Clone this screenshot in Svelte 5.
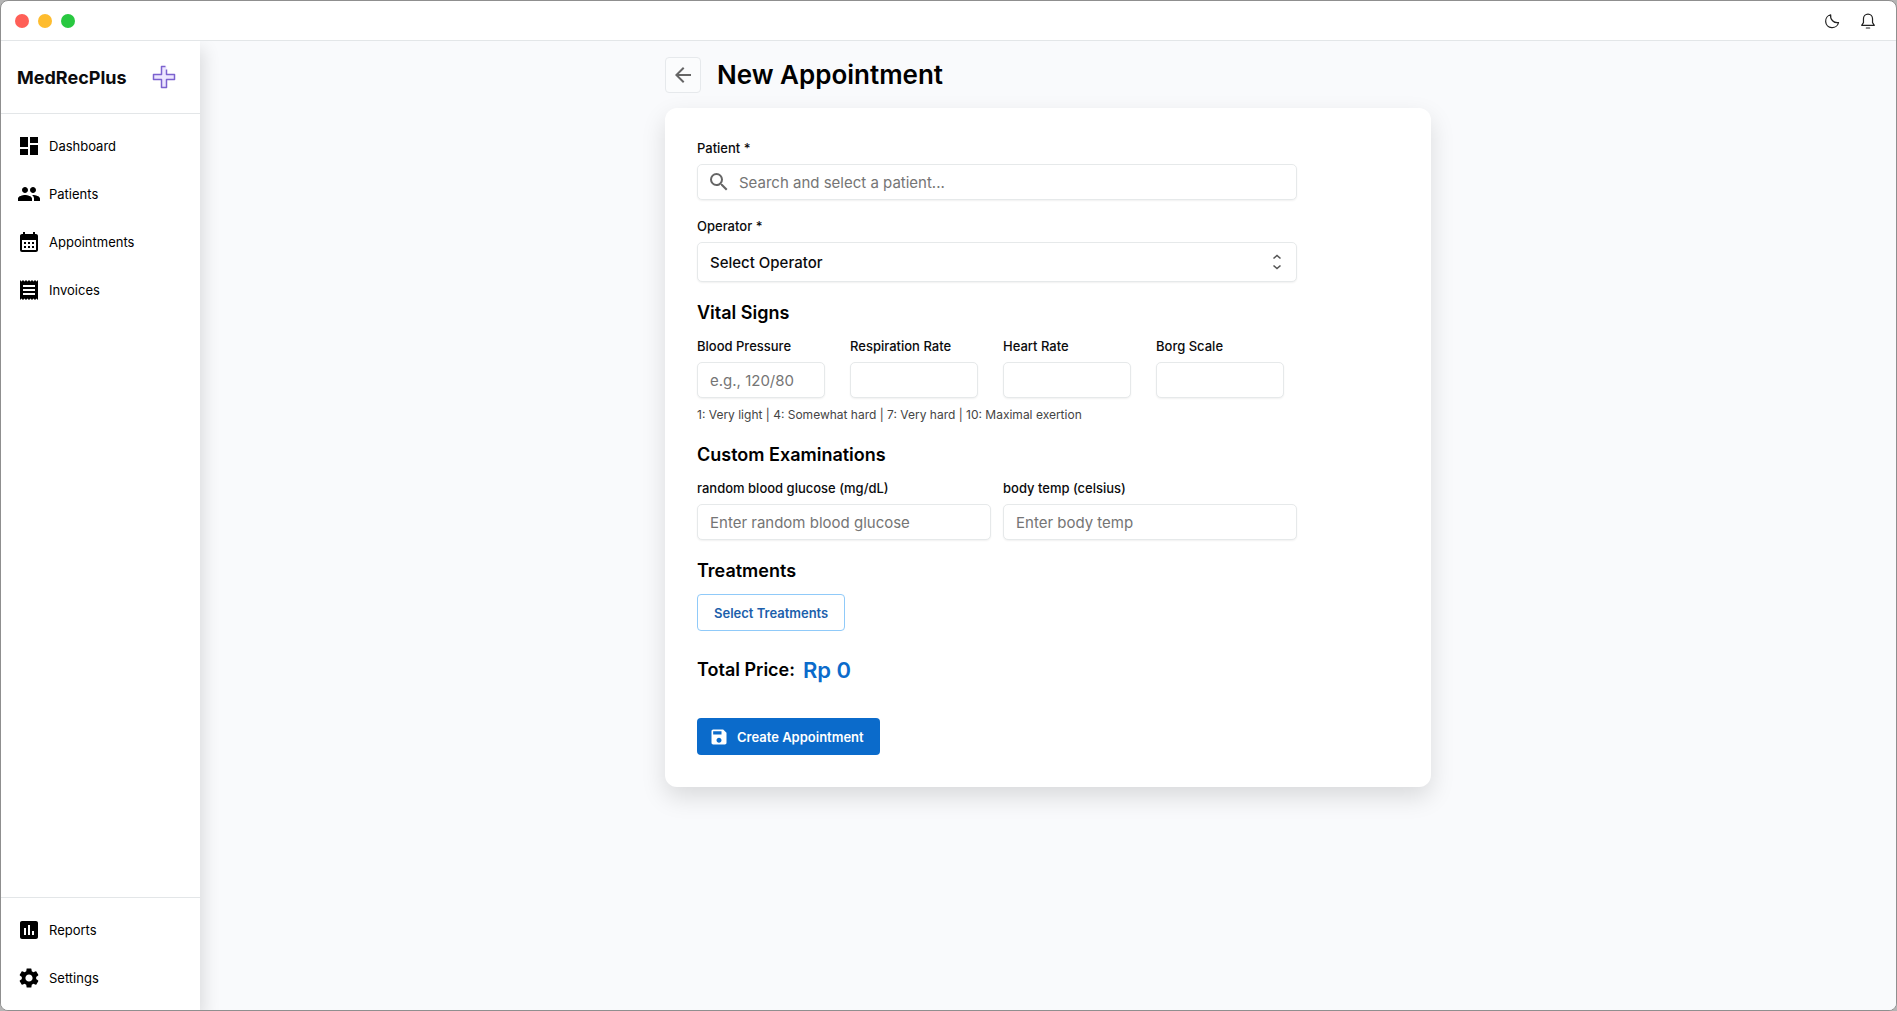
<script lang="ts">
    type NavItem = {
        label: string;
        icon: string;
    };

    type Vital = {
        id: string;
        label: string;
        placeholder: string;
    };

    const mainNav: NavItem[] = [
        { label: 'Dashboard', icon: 'M3 13h8V3H3v10zm0 8h8v-6H3v6zm10 0h8V11h-8v10zm0-18v6h8V3h-8z' },
        { label: 'Patients', icon: 'M16 11c1.66 0 2.99-1.34 2.99-3S17.66 5 16 5s-3 1.34-3 3 1.34 3 3 3zm-8 0c1.66 0 2.99-1.34 2.99-3S9.66 5 8 5 5 6.34 5 8s1.34 3 3 3zm0 2c-2.33 0-7 1.17-7 3.5V19h14v-2.5c0-2.33-4.67-3.5-7-3.5zm8 0c-.29 0-.62.02-.97.05 1.16.84 1.97 1.97 1.97 3.45V19h6v-2.5c0-2.33-4.67-3.5-7-3.5z' },
        { label: 'Appointments', icon: 'M19 4h-1V2h-2v2H8V2H6v2H5c-1.11 0-1.99.9-1.99 2L3 20a2 2 0 0 0 2 2h14c1.1 0 2-.9 2-2V6c0-1.1-.9-2-2-2zm0 16H5V10h14v10zM9 14H7v-2h2v2zm4 0h-2v-2h2v2zm4 0h-2v-2h2v2zm-8 4H7v-2h2v2zm4 0h-2v-2h2v2zm4 0h-2v-2h2v2z' },
        { label: 'Invoices', icon: 'M18 17H6v-2h12v2zm0-4H6v-2h12v2zm0-4H6V7h12v2zM3 22l1.5-1.5L6 22l1.5-1.5L9 22l1.5-1.5L12 22l1.5-1.5L15 22l1.5-1.5L18 22l1.5-1.5L21 22V2l-1.5 1.5L18 2l-1.5 1.5L15 2l-1.5 1.5L12 2l-1.5 1.5L9 2 7.5 3.5 6 2 4.5 3.5 3 2v20z' }
    ];

    const footerNav: NavItem[] = [
        { label: 'Reports', icon: 'M19 3H5c-1.1 0-2 .9-2 2v14c0 1.1.9 2 2 2h14c1.1 0 2-.9 2-2V5c0-1.1-.9-2-2-2zM9 17H7v-7h2v7zm4 0h-2V7h2v10zm4 0h-2v-4h2v4z' },
        { label: 'Settings', icon: 'M19.14 12.94c.04-.3.06-.61.06-.94 0-.32-.02-.64-.07-.94l2.03-1.58a.49.49 0 0 0 .12-.61l-1.92-3.32a.488.488 0 0 0-.59-.22l-2.39.96c-.5-.38-1.03-.7-1.62-.94l-.36-2.54a.484.484 0 0 0-.48-.41h-3.84c-.24 0-.43.17-.47.41l-.36 2.54c-.59.24-1.13.57-1.62.94l-2.39-.96c-.22-.08-.47 0-.59.22L2.74 8.87c-.12.21-.08.47.12.61l2.03 1.58c-.05.3-.09.63-.09.94s.02.64.07.94l-2.03 1.58a.49.49 0 0 0-.12.61l1.92 3.32c.12.22.37.29.59.22l2.39-.96c.5.38 1.03.7 1.62.94l.36 2.54c.05.24.24.41.48.41h3.84c.24 0 .44-.17.47-.41l.36-2.54c.59-.24 1.13-.56 1.62-.94l2.39.96c.22.08.47 0 .59-.22l1.92-3.32c.12-.22.07-.47-.12-.61l-2.01-1.58zM12 15.6c-1.98 0-3.6-1.62-3.6-3.6s1.62-3.6 3.6-3.6 3.6 1.62 3.6 3.6-1.62 3.6-3.6 3.6z' }
    ];

    const vitals: Vital[] = [
        { id: 'blood-pressure', label: 'Blood Pressure', placeholder: 'e.g., 120/80' },
        { id: 'respiration-rate', label: 'Respiration Rate', placeholder: '' },
        { id: 'heart-rate', label: 'Heart Rate', placeholder: '' },
        { id: 'borg-scale', label: 'Borg Scale', placeholder: '' }
    ];

    const exams = [
        { id: 'glucose', name: 'random blood glucose', unit: 'mg/dL' },
        { id: 'temp', name: 'body temp', unit: 'celsius' }
    ];

    let total = $state(0);
</script>

{#snippet navLink(item: NavItem)}
    <a class="nav-link" href="#{item.label.toLowerCase()}">
        <svg viewBox="0 0 24 24" width="24" height="24" fill="currentColor"><path d={item.icon} /></svg>
        <span>{item.label}</span>
    </a>
{/snippet}

<div class="window">
    <header class="titlebar">
        <div class="lights">
            <span class="light close"></span>
            <span class="light minimize"></span>
            <span class="light maximize"></span>
        </div>
        <div class="actions">
            <button aria-label="Toggle dark mode">
                <svg viewBox="0 0 24 24" width="16" height="16" fill="none" stroke="currentColor" stroke-width="1.8" stroke-linecap="round" stroke-linejoin="round">
                    <path d="M10 2.600A9.800 9.800 0 1 0 21.800 14.400 10.200 10.200 0 0 1 10 2.600z" />
                </svg>
            </button>
            <button aria-label="Notifications">
                <svg viewBox="0 0 24 24" width="16" height="16" fill="none" stroke="currentColor" stroke-width="1.8" stroke-linejoin="round">
                    <path d="M2.500 18.500h19L18.800 14.500V8.500A6.800 6.800 0 0 0 5.200 8.500v6z" />
                    <path d="M9.500 22.500h5" stroke-linecap="round" />
                </svg>
            </button>
        </div>
    </header>

    <div class="body">
        <aside class="sidebar">
            <div class="brand">
                <span>MedRecPlus</span>
                <svg viewBox="0 0 24 24" width="24" height="24" fill="none" stroke="#7c62cf" stroke-width="1.5" stroke-linejoin="round">
                    <path fill="#ece6ff" stroke="none" d="M9.500 1.500h5v8h8v5h-8v8h-5v-8h-8v-5h8z" />
                    <path d="M13.500 1.500h-4v8h-8v5h8v8h5v-8h8v-5h-8V4.500" />
                </svg>
            </div>
            <nav class="nav">
                {#each mainNav as item}
                    {@render navLink(item)}
                {/each}
            </nav>
            <nav class="nav nav-footer" aria-label="Secondary">
                {#each footerNav as item}
                    {@render navLink(item)}
                {/each}
            </nav>
        </aside>

        <main>
            <div class="container">
                <div class="page-head">
                    <button class="back" aria-label="Back">
                        <svg viewBox="0 0 24 24" width="24" height="24" fill="currentColor"><path d="M20 11H7.830l5.590-5.590L12 4l-8 8 8 8 1.410-1.410L7.830 13H20v-2z" /></svg>
                    </button>
                    <h1>New Appointment</h1>
                </div>

                <form class="card" onsubmit={(e) => e.preventDefault()}>
                    <div class="field">
                        <label for="patient">Patient *</label>
                        <div class="search">
                            <svg viewBox="0 0 24 24" width="24" height="24" fill="currentColor"><path d="M15.500 14h-.79l-.28-.27A6.471 6.471 0 0 0 16 9.500 6.500 6.500 0 1 0 9.500 16c1.610 0 3.090-.59 4.230-1.570l.27.28v.79l5 4.990L20.490 19l-4.990-5zm-6 0C7.010 14 5 11.990 5 9.500S7.010 5 9.500 5 14 7.010 14 9.500 11.990 14 9.500 14z" /></svg>
                            <input id="patient" type="text" placeholder="Search and select a patient..." />
                        </div>
                    </div>

                    <div class="field">
                        <label for="operator">Operator *</label>
                        <div class="select">
                            <select id="operator">
                                <option>Select Operator</option>
                            </select>
                            <svg viewBox="0 0 16 20" width="16" height="20" fill="none" stroke="currentColor" stroke-width="1.6">
                                <path d="M4.500 6.500 8 3.500 11.500 6.500M4.500 13.500 8 16.500 11.500 13.500" />
                            </svg>
                        </div>
                    </div>

                    <section>
                        <h2>Vital Signs</h2>
                        <div class="vitals">
                            {#each vitals as vital}
                                <div class="field">
                                    <label for={vital.id}>{vital.label}</label>
                                    <input id={vital.id} type="text" placeholder={vital.placeholder} />
                                </div>
                            {/each}
                        </div>
                        <p class="hint">1: Very light | 4: Somewhat hard | 7: Very hard | 10: Maximal exertion</p>
                    </section>

                    <section>
                        <h2>Custom Examinations</h2>
                        <div class="exams">
                            {#each exams as exam}
                                <div class="field">
                                    <label for={exam.id}>{exam.name} ({exam.unit})</label>
                                    <input id={exam.id} type="text" placeholder="Enter {exam.name}" />
                                </div>
                            {/each}
                        </div>
                    </section>

                    <section>
                        <h2>Treatments</h2>
                        <button class="btn btn-outline" type="button">Select Treatments</button>
                    </section>

                    <div class="total">
                        <span>Total Price:</span>
                        <strong>Rp {total}</strong>
                    </div>

                    <button class="btn btn-primary" type="submit">
                        <svg viewBox="0 0 24 24" width="20" height="20" fill="currentColor"><path d="M17 3H5c-1.110 0-2 .9-2 2v14c0 1.100.89 2 2 2h14c1.100 0 2-.9 2-2V7l-4-4zm-5 16c-1.660 0-3-1.340-3-3s1.340-3 3-3 3 1.340 3 3-1.340 3-3 3zm3-10H5V5h10v4z" /></svg>
                        Create Appointment
                    </button>
                </form>
            </div>
        </main>
    </div>
</div>

<style>
    :global(body) {
        background: #b5b5b5;
    }

    .window {
        display: flex;
        flex-direction: column;
        box-sizing: border-box;
        min-height: 100vh;
        border: 1px solid #8f8f8f;
        border-radius: 8px;
        overflow: hidden;
        background: #fff;
        color: #0b0b0d;
        font-family: Inter, "Liberation Sans", sans-serif;
        font-size: 13px;
    }

    svg {
        display: block;
        flex-shrink: 0;
    }

    button {
        font-family: inherit;
        cursor: pointer;
    }

    .titlebar {
        display: flex;
        align-items: center;
        justify-content: space-between;
        height: 39px;
        padding: 0 20px 0 14px;
        border-bottom: 1px solid #e3e6e8;
    }

    .lights {
        display: flex;
        gap: 9px;
    }

    .light {
        width: 14px;
        height: 14px;
        border-radius: 50%;
    }

    .close {
        background: #ff5f57;
    }

    .minimize {
        background: #febc2e;
    }

    .maximize {
        background: #28c840;
    }

    .actions {
        display: flex;
        gap: 20px;
    }

    .actions button {
        padding: 0;
        border: none;
        background: none;
        color: #222;
    }

    .body {
        display: flex;
        flex: 1;
        overflow: clip;
    }

    .sidebar {
        z-index: 1;
        display: flex;
        flex-direction: column;
        width: 199px;
        background: #fff;
        box-shadow: 4px 8px 16px rgba(0, 0, 0, 0.12);
    }

    .brand {
        display: flex;
        align-items: center;
        justify-content: space-between;
        height: 72px;
        padding: 0 24px 0 16px;
        border-bottom: 1px solid #e3e6e8;
        font-size: 18px;
        font-weight: 700;
    }

    .nav {
        padding: 8px 0;
    }

    .nav-footer {
        margin-top: auto;
        border-top: 1px solid #e3e6e8;
    }

    .nav-link {
        display: flex;
        align-items: center;
        gap: 8px;
        height: 48px;
        padding-left: 16px;
        color: #000;
        text-decoration: none;
    }

    main {
        flex: 1;
        padding: 16px;
        background: #f9fafc;
    }

    .container {
        max-width: 766px;
        margin: 0 auto;
    }

    .page-head {
        display: flex;
        align-items: center;
        gap: 16px;
        margin-bottom: 15px;
    }

    .back {
        display: flex;
        align-items: center;
        justify-content: center;
        width: 36px;
        height: 36px;
        padding: 0;
        border: 1px solid #e6e9ec;
        border-radius: 4px;
        background: #fbfcfd;
        color: #666;
    }

    h1 {
        margin: 0;
        font-size: 26px;
        line-height: 36px;
        font-weight: 600;
        color: #000;
    }

    .card {
        display: flex;
        flex-direction: column;
        gap: 18px;
        padding: 32px;
        border-radius: 12px;
        background: #fff;
        box-shadow: 0 10px 24px rgba(0, 0, 0, 0.13);
    }

    .card > * {
        width: 100%;
        max-width: 600px;
    }

    section {
        display: flex;
        flex-direction: column;
    }

    h2 {
        margin: 0 0 10px;
        font-size: 18px;
        line-height: 26px;
        font-weight: 600;
        color: #000;
    }

    .field {
        display: flex;
        flex-direction: column;
        gap: 8px;
    }

    label {
        line-height: 16px;
        font-weight: 500;
    }

    input,
    select {
        box-sizing: border-box;
        width: 100%;
        height: 36px;
        padding: 0 12px;
        border: 1px solid #e6e9ea;
        border-radius: 5px;
        background: #fff;
        box-shadow: 0 1px 2px rgba(0, 0, 0, 0.06);
        color: #0b0b0d;
        font-family: inherit;
        font-size: 15px;
    }

    input::placeholder {
        color: #757575;
        opacity: 1;
    }

    .search,
    .select {
        position: relative;
    }

    .search svg {
        position: absolute;
        top: 6px;
        left: 10px;
        color: #666;
    }

    .search input {
        padding-left: 41px;
    }

    .select select {
        height: 40px;
        appearance: none;
        font-weight: 500;
    }

    .select svg {
        position: absolute;
        top: 10px;
        right: 12px;
        color: #555;
        pointer-events: none;
    }

    .vitals,
    .exams {
        display: grid;
        grid-template-columns: repeat(4, 1fr);
        gap: 12px;
        padding-top: 2px;
    }

    .exams {
        grid-template-columns: repeat(2, 1fr);
    }

    .vitals input {
        max-width: 128px;
    }

    .hint {
        margin: 8px 0 0;
        font-size: 12px;
        line-height: 18px;
        color: #444;
    }

    .btn {
        display: flex;
        align-items: center;
        justify-content: center;
        align-self: flex-start;
        gap: 8px;
        width: auto;
        height: 37px;
        border-radius: 4px;
        font-size: 13px;
        font-weight: 600;
    }

    .btn-outline {
        padding: 0 16px;
        border: 1px solid #90caf9;
        background: #fff;
        color: #1c5fab;
    }

    .btn-primary {
        padding: 0 16px 0 12px;
        border: none;
        background: #0b6bcb;
        color: #fff;
    }

    .total {
        display: flex;
        align-items: center;
        gap: 8px;
        padding: 7px 0 16px;
        font-size: 18px;
        line-height: 28px;
        font-weight: 600;
        color: #000;
    }

    .total strong {
        font-size: 22px;
        font-weight: 600;
        color: #0b6bcb;
    }
</style>
